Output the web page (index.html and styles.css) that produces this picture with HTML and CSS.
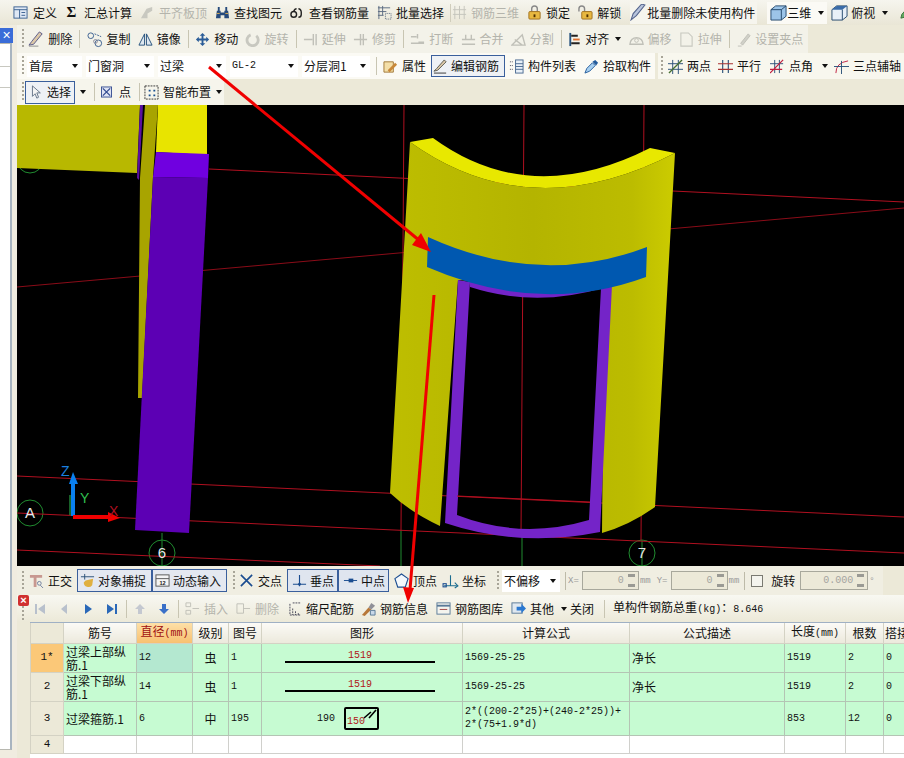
FILE: index.html
```html
<!DOCTYPE html>
<html lang="zh">
<head>
<meta charset="utf-8">
<title>钢筋编辑</title>
<link rel="stylesheet" href="styles.css">
</head>
<body>
<svg width="0" height="0" class="defs">
<defs>
<linearGradient id="wall" x1="0" x2="1" y1="0" y2="0">
<stop offset="0" stop-color="#bebe00"/><stop offset=".5" stop-color="#b4b400"/><stop offset=".85" stop-color="#bcbc00"/><stop offset="1" stop-color="#cccc00"/>
</linearGradient>
</defs>
</svg>

<div class="app">
  <header class="bar-top">
    <div class="it i5"><svg class="ic" viewBox="0 0 16 16"><rect x="1" y="2" width="14" height="12" fill="#dfe8f4" stroke="#3a6090"/><path d="M1 5h14M7 5v9M9 8h4M9 11h4" stroke="#3a6090"/></svg><span>定义</span></div>
    <div class="it i6"><b class="sigma">Σ</b><span>汇总计算</span></div>
    <div class="it off"><svg class="ic" viewBox="0 0 16 16"><path d="M1 14l6-10 6-2v4l-5 3v5z" fill="#c8c8c0"/></svg><span>平齐板顶</span></div>
    <div class="it"><svg class="ic" viewBox="0 0 16 16"><path d="M2 6h4v8H1zM10 6h4l1 8h-5zM6 8h4v3H6zM3 2h2v4H3zM11 2h2v4h-2z" fill="#264a7c"/><path d="M2 9h3M11 9h3" stroke="#e0b050"/></svg><span>查找图元</span></div>
    <div class="it"><svg class="ic" viewBox="0 0 16 16"><circle cx="4" cy="10" r="3" fill="none" stroke="#222" stroke-width="1.5"/><path d="M4 7q1-3 3-3M12 7q-1-3-3-3M12 7v3a3 3 0 0 1-3 3" fill="none" stroke="#222" stroke-width="1.5"/></svg><span>查看钢筋量</span></div>
    <div class="it"><svg class="ic" viewBox="0 0 16 16"><path d="M2 1v14M6 1v10M1 3h13M1 7h9M1 11h6" stroke="#5a6a80"/><rect x="9" y="9" width="6" height="6" fill="none" stroke="#5a6a80" stroke-dasharray="1 1"/></svg><span>批量选择</span></div>
    <i class="sep s-top"></i>
    <div class="it off"><svg class="ic" viewBox="0 0 16 16"><path d="M3 1v14M8 1v14M13 1v14M1 5h14M1 10h14" stroke="#c4c4bc"/></svg><span>钢筋三维</span></div>
    <div class="it"><svg class="ic" viewBox="0 0 16 16"><path d="M5 7V4a3 3 0 0 1 6 0v3" fill="none" stroke="#888" stroke-width="1.5"/><rect x="2" y="7" width="12" height="8" rx="1" fill="#e8b840" stroke="#a07020"/><rect x="7" y="10" width="2" height="3" fill="#503000"/></svg><span>锁定</span></div>
    <div class="it"><svg class="ic" viewBox="0 0 16 16"><path d="M1 7V4a3 3 0 0 1 6 0v3" fill="none" stroke="#888" stroke-width="1.5"/><rect x="4" y="7" width="11" height="8" rx="1" fill="#e8b840" stroke="#a07020"/><rect x="9" y="10" width="2" height="3" fill="#503000"/></svg><span>解锁</span></div>
    <div class="it wide"><svg class="ic" viewBox="0 0 16 16"><path d="M1 15l5-4 8-10-3-1-8 9z" fill="#b8c4dc" stroke="#54648c"/></svg><span>批量删除未使用构件</span></div>
    <div class="view">
      <div class="it"><svg class="ic lg" viewBox="0 0 18 18"><path d="M1 6l5-4h11v11l-5 4H1z" fill="#9cc4e8" stroke="#24486c"/><path d="M1 6h11v11M12 6l5-4" fill="none" stroke="#24486c"/></svg><span>三维</span></div><i class="arw"></i>
    </div>
    <div class="it"><svg class="ic lg" viewBox="0 0 18 18"><path d="M1 6l5-4h11v11l-5 4H1z" fill="#e8f0f8" stroke="#24486c"/><path d="M1 6l5-4h11l-5 4z" fill="#3a6ca8"/><path d="M12 6v11" stroke="#24486c"/></svg><span>俯视</span></div><i class="arw"></i>
    <svg class="ic end" viewBox="0 0 16 16"><path d="M2 14l4-1 8-10-3-2-8 9z" fill="#60a860" stroke="#387038"/></svg>
  </header>

  <div class="shell">
    <aside class="side">
      <div class="side-tab">×</div>
      <div class="side-list"><div class="side-a"></div><div class="side-b"></div></div>
    </aside>
    <main class="work">
      <div class="tb tb-edit">
        <i class="grip"></i>
        <div class="it n1"><svg class="ic lg" viewBox="0 0 18 18"><path d="M1 15l5-1 9-11-3-2-8 10z" fill="#dcc8a8" stroke="#5a5a88"/><path d="M1 16h10" stroke="#8a8a8a"/></svg><span>删除</span></div>
        <i class="sep"></i>
        <div class="it"><svg class="ic lg" viewBox="0 0 18 18"><circle cx="4" cy="5" r="3" fill="none" stroke="#3a6090"/><circle cx="12" cy="13" r="3.5" fill="none" stroke="#3a6090"/><circle cx="9" cy="11" r="2" fill="none" stroke="#889"/><path d="M8 3l7 3" stroke="#3a6090" stroke-dasharray="2 1"/></svg><span>复制</span></div>
        <div class="it"><svg class="ic" viewBox="0 0 16 16"><path d="M7 2L1 14h6zM9 2l6 12H9z" fill="#dfe8f0" stroke="#24507c"/></svg><span>镜像</span></div>
        <i class="sep"></i>
        <div class="it"><svg class="ic" viewBox="0 0 16 16"><path d="M8 1l3 3H9v3h3V5l3 3-3 3V9H9v3h2l-3 3-3-3h2V9H4v2L1 8l3-3v2h3V4H5z" fill="#2a5c98"/></svg><span>移动</span></div>
        <div class="it off"><svg class="ic" viewBox="0 0 16 16"><path d="M12 4a6 6 0 1 1-6-1" fill="none" stroke="#c8c8c0" stroke-width="3"/></svg><span>旋转</span></div>
        <i class="sep"></i>
        <div class="it off"><svg class="ic" viewBox="0 0 16 16"><path d="M1 8h9M11 2v12M14 2v12" stroke="#c0c0b8" stroke-width="1.5"/></svg><span>延伸</span></div>
        <div class="it off"><svg class="ic" viewBox="0 0 16 16"><path d="M1 8h14M8 2v12M11 2v12" stroke="#c0c0b8" stroke-width="1.5"/></svg><span>修剪</span></div>
        <i class="sep"></i>
        <div class="it off"><svg class="ic" viewBox="0 0 16 16"><path d="M1 5h6M9 11h6M1 12h14M8 2v5" stroke="#c0c0b8" stroke-width="1.5"/></svg><span>打断</span></div>
        <div class="it off"><svg class="ic" viewBox="0 0 16 16"><path d="M1 8h14M1 13h14M5 3v5M11 3v5" stroke="#c0c0b8" stroke-width="1.5"/></svg><span>合并</span></div>
        <div class="it off"><svg class="ic" viewBox="0 0 16 16"><path d="M1 14h14L12 3 1 14zM4 8l8 6" fill="none" stroke="#c0c0b8" stroke-width="1.5"/></svg><span>分割</span></div>
        <i class="sep"></i>
        <div class="it"><svg class="ic sm" viewBox="0 0 13 16"><path d="M2 1v14" stroke="#24507c" stroke-width="2"/><path d="M3 4h7M3 12h9" stroke="#222" stroke-width="2"/><path d="M5 8h7" stroke="#e07030" stroke-width="2"/></svg><span>对齐</span></div><i class="arw a-in"></i>
        <div class="it off"><svg class="ic" viewBox="0 0 16 16"><path d="M1 13a7 7 0 0 1 14 0z" fill="none" stroke="#c0c0b8" stroke-width="1.5"/><circle cx="8" cy="9" r="2" fill="none" stroke="#c0c0b8"/></svg><span>偏移</span></div>
        <div class="it off"><svg class="ic" viewBox="0 0 16 16"><path d="M2 1h8l4 4v10H2z" fill="none" stroke="#c8c8c0" stroke-width="1.2"/></svg><span>拉伸</span></div>
        <i class="sep"></i>
        <div class="it off"><svg class="ic" viewBox="0 0 16 16"><path d="M2 15h4M5 12l8-10 2 2-8 10z" fill="#d0d0c8" stroke="#c0c0b8"/></svg><span>设置夹点</span></div>
      </div>

      <div class="tb-split">
        <div class="tb tb-comp">
          <i class="grip"></i>
          <div class="combo c1"><span>首层</span><i class="arw"></i></div>
          <div class="combo"><span>门窗洞</span><i class="arw"></i></div>
          <div class="combo"><span>过梁</span><i class="arw"></i></div>
          <div class="combo"><span class="mono">GL-2</span><i class="arw"></i></div>
          <div class="combo"><span>分层洞1</span><i class="arw"></i></div>
          <i class="sep"></i>
          <div class="it"><svg class="ic" viewBox="0 0 16 16"><path d="M1 3h10v11H1z" fill="#f4dfa8" stroke="#a07838"/><path d="M5 12l8-8 2 2-8 8z" fill="#c88838"/></svg><span>属性</span></div>
          <div class="it btn b-edit"><svg class="ic" viewBox="0 0 16 16"><path d="M1 13l4-1 9-9-2-2-8 9z" fill="#dcc8a8" stroke="#5a5a50"/><path d="M1 15h13" stroke="#333"/></svg><span>编辑钢筋</span></div>
          <div class="it"><svg class="ic" viewBox="0 0 16 16"><path d="M1 3h3M1 7h3M1 11h3" stroke="#445" stroke-dasharray="1 1"/><rect x="7" y="1" width="8" height="14" fill="#e8f0f8" stroke="#4a6a90"/><path d="M7 5h8M7 8h8M7 11h8" stroke="#4a6a90"/></svg><span>构件列表</span></div>
          <div class="it pick"><svg class="ic" viewBox="0 0 16 16"><path d="M1 15l2-5 6-6 3 3-6 6z" fill="#a8d0f0" stroke="#245c9c"/><path d="M9 3l3-2 3 3-2 3z" fill="#245c9c"/></svg><span>拾取构件</span></div>
        </div>
        <div class="tb tb-axis">
          <i class="grip"></i>
          <div class="it"><svg class="ic" viewBox="0 0 16 16"><path d="M5 1v15M11 1v15M0 5h16M0 11h16" stroke="#2a5078"/><path d="M1 15L15 1" stroke="#487030" stroke-width="1.4"/></svg><span>两点</span></div>
          <div class="it"><svg class="ic" viewBox="0 0 16 16"><path d="M5 1v14M11 1v14" stroke="#2a5078" stroke-width="1.2"/><path d="M0 5h16M0 11h16" stroke="#a83030" stroke-width="1.2"/></svg><span>平行</span></div>
          <div class="it ang"><svg class="ic" viewBox="0 0 16 16"><path d="M5 1v14M10 1v14M0 5h14" stroke="#2a5078"/><path d="M0 15L14 1M0 11h13" stroke="#c02040" stroke-width="1.3"/></svg><span>点角</span></div><i class="arw a-in"></i>
          <div class="it"><svg class="ic" viewBox="0 0 16 16"><path d="M2 15q0-11 13-13" fill="none" stroke="#c02040"/><path d="M8 2v14M0 8h16" stroke="#2a5078"/></svg><span>三点辅轴</span></div>
        </div>
      </div>

      <div class="tb tb-sel">
        <i class="grip"></i>
        <div class="it btn b-sel"><svg class="ic xs" viewBox="0 0 11 16"><path d="M2 1v12l3-3 2 5 2-1-2-5h4z" fill="#f4f4f4" stroke="#5a6a80"/></svg><span>选择</span></div><i class="arw a-in"></i>
        <i class="sep"></i>
        <div class="it g7"><svg class="ic xs" viewBox="0 0 12 12"><rect x=".5" y=".5" width="11" height="11" fill="#dfe4f4" stroke="#344c90"/><path d="M2 2l8 8M10 2l-8 8" stroke="#344c90" stroke-width="1.4"/></svg><span>点</span></div>
        <i class="sep"></i>
        <div class="it"><svg class="ic" viewBox="0 0 16 16"><rect x="1" y="1" width="14" height="14" fill="none" stroke="#333" stroke-dasharray="2 1"/><path d="M5 5h2v2H5zM10 5h2v2h-2zM5 10h2v2H5zM10 10h2v2h-2z" fill="#1a5090"/></svg><span>智能布置</span></div><i class="arw a-in"></i>
      </div>

      <div class="scene">
        <svg class="scene-svg" viewBox="17 105 887 461" width="887" height="461">
          <rect x="17" y="105" width="887" height="461" fill="#000"/>
          <g class="grid-g">
            <path d="M162 533V566M401 530V566M522 535V566M642 540V566"/>
            <circle cx="30" cy="513" r="13"/><circle cx="162" cy="553" r="13"/><circle cx="642" cy="553" r="13"/><circle cx="30" cy="160" r="13"/>
          </g>
          <g class="grid-r">
            <path d="M209 169L904 202"/>
            <path class="dim-l" d="M17 287L904 208"/>
            <path d="M17 476L904 517"/>
            <path d="M17 513L904 553"/>
            <path d="M17 550L380 566"/>
            <path d="M404 105L401 530"/><path d="M524 105L521 535"/><path d="M644 105L641 540"/>
          </g>
          <text class="ax-a" x="30" y="518">A</text><text class="ax-a" x="162" y="558">6</text><text class="ax-a" x="642" y="558">7</text>
          <!-- left wall and column -->
          <polygon points="17,105 140,105 137,173 17,168" fill="#b8b800"/>
          <polygon points="158,105 207,105 207,155 156,152" fill="#e8e400"/>
          <polygon points="145,105 158,105 153,177 142,398 138,398 140,178" fill="#a8a400"/>
          <polygon points="140,105 143,105 139,180 137,178" fill="#5a10a0"/>
          <polygon points="153,177 208,178 189,533 135,530" fill="#5c00b4"/>
          <polygon points="156,152 209,154 208,178 153,177" fill="#7000e0"/>
          <!-- door wall -->
          <path d="M410 142Q530 228 675 153L655 507Q630 525 602 533L604 288 458 280 440 526Q410 512 390 493Z" fill="url(#wall)"/>
          <path d="M410 142L433 138Q530 209 650 148L675 153Q530 228 410 142Z" fill="#e8e800"/>
          <path d="M458 280L470 282 457 515Q522 540 589 520L601 288 612 285 600 532Q520 548 445 523Z" fill="#7424c8"/>
          <path d="M470 278L603 278 603 288Q535 308 470 287Z" fill="#7424c8"/>
          <path d="M457 496L590 502" class="in-r"/>
          <path d="M428 237Q540 288 647 247L646 277Q540 316 427 267Z" fill="#0058b0"/>
          <!-- axes -->
          <path d="M70 495V515" stroke="#30c050"/>
          <rect x="71" y="480" width="4" height="36" fill="#0a80f0"/>
          <polygon points="73,472 78,484 69,484" fill="#0a80f0"/>
          <rect x="73" y="515" width="36" height="4" fill="#f00000"/>
          <polygon points="120,518 108,512 108,522" fill="#f00000"/>
          <text class="ax z" x="61" y="476">Z</text><text class="ax y" x="80" y="503">Y</text><text class="ax x" x="109" y="516">X</text>
        </svg>
      </div>

      <div class="tb tb-snap">
        <i class="grip"></i>
        <div class="it"><svg class="ic" viewBox="0 0 16 16"><path d="M1 2h13v3H8v10H5V5H1z" fill="#c89890"/><circle cx="11" cy="11" r="2" fill="none" stroke="#7080a0"/><path d="M12 13l3 3" stroke="#7080a0"/></svg><span>正交</span></div>
        <div class="snap-g">
          <div class="it btn b75"><svg class="ic" viewBox="0 0 16 16"><path d="M1 4h14M5 1v6" stroke="#2a5078"/><path d="M4 10a5 5 0 0 0 9 3l1-7-8 2z" fill="#e0b040"/></svg><span>对象捕捉</span></div>
          <div class="it btn b75"><svg class="ic" viewBox="0 0 16 16"><rect x="1" y="2" width="14" height="12" fill="#f4f4f4" stroke="#555"/><path d="M1 6h14" stroke="#555"/><text class="ic-t" x="8" y="13">12</text></svg><span>动态输入</span></div>
        </div>
        <i class="grip g-m"></i>
        <div class="it"><svg class="ic" viewBox="0 0 16 16"><path d="M2 2l12 12M14 2L2 14" stroke="#1a4c90" stroke-width="1.7"/></svg><span>交点</span></div>
        <div class="snap-g">
          <div class="it btn b51"><svg class="ic" viewBox="0 0 16 16"><path d="M8 2v12M1 12h14" stroke="#1a4c90" stroke-width="1.2"/><circle cx="8" cy="12" r="1.5" fill="#1a4c90"/></svg><span>垂点</span></div>
          <div class="it btn b51"><svg class="ic" viewBox="0 0 16 16"><path d="M1 8h14" stroke="#1a4c90"/><rect x="6" y="6" width="5" height="4" fill="#1a4c90"/></svg><span>中点</span></div>
        </div>
        <div class="it"><svg class="ic" viewBox="0 0 16 16"><path d="M8 1l7 5-3 9H4L1 6z" fill="#f4f8fc" stroke="#1a4c90" stroke-width="1.2"/></svg><span>顶点</span></div>
        <div class="it"><svg class="ic lg" viewBox="0 0 16 16"><path d="M8 3v10M2 13h12" stroke="#1a6c90"/><rect x="1" y="11" width="3" height="3" fill="none" stroke="#1a4c90"/><path d="M12 10l3 3-3 2" fill="none" stroke="#1a6c90"/></svg><span>坐标</span></div>
        <i class="grip g-n"></i>
        <div class="combo c-off"><span>不偏移</span><i class="arw"></i></div>
        <i class="sep s-n"></i>
        <span class="lab mono">X=</span><div class="spin s57"><span class="mono">0</span><i class="spn"></i></div><span class="lab mono mm">mm</span>
        <span class="lab mono ly">Y=</span><div class="spin s57"><span class="mono">0</span><i class="spn"></i></div><span class="lab mono mm">mm</span>
        <i class="sep s-n"></i>
        <i class="check"></i><span class="rot">旋转</span>
        <div class="spin s68"><span class="mono">0.000</span><i class="spn"></i></div><span class="lab mono mm">°</span>
      </div>

      <div class="tb tb-rebar">
        <div class="dock"><i class="close">×</i><i class="grip"></i></div>
        <svg class="nv n0" viewBox="0 0 12 12"><path d="M1 1h2v10H1zM11 1v10L4 6z" fill="#b8c0cc"/></svg>
        <svg class="nv" viewBox="0 0 12 12"><path d="M9 1v10L3 6z" fill="#b8c0cc"/></svg>
        <svg class="nv" viewBox="0 0 12 12"><path d="M3 1v10l7-5z" fill="#2a68b8"/></svg>
        <svg class="nv" viewBox="0 0 12 12"><path d="M1 1v10l7-5zM9 1h2v10H9z" fill="#2a68b8"/></svg>
        <i class="sep"></i>
        <svg class="nv" viewBox="0 0 12 12"><path d="M6 1l5 5H8v5H4V6H1z" fill="#c4c8d0"/></svg>
        <svg class="nv" viewBox="0 0 12 12"><path d="M4 1h4v5h3l-5 5-5-5h3z" fill="#3a70c8"/></svg>
        <i class="sep"></i>
        <div class="it off ins"><svg class="ic" viewBox="0 0 16 16"><path d="M1 2h5v4H1zM1 10h5v4H1zM8 8h7" fill="none" stroke="#c0c0b8"/></svg><span>插入</span></div>
        <div class="it off"><svg class="ic" viewBox="0 0 16 16"><path d="M1 3h7v10H1zM8 8h7" fill="none" stroke="#c0c0b8"/></svg><span>删除</span></div>
        <div class="it scale"><svg class="ic sm" viewBox="0 0 14 16"><path d="M1 3v12M4 8v7M7 11v4M10 13v2M1 15h12M4 2h9" stroke="#445" stroke-dasharray="2 1"/></svg><span>缩尺配筋</span></div>
        <div class="it"><svg class="ic" viewBox="0 0 16 16"><path d="M1 15l7-8 3 2-7 7z" fill="#b87838"/><path d="M8 7l3-5 4 3-4 4z" fill="#909098"/><path d="M10 10h5v5h-5z" fill="#c8d8e8" stroke="#5a7a98"/></svg><span>钢筋信息</span></div>
        <div class="it"><svg class="ic" viewBox="0 0 16 16"><rect x="1" y="2" width="14" height="12" fill="#f4f4ee" stroke="#5a7a98"/><path d="M1 5h14" stroke="#5a7a98" stroke-width="2"/><path d="M4 9h8" stroke="#a04040"/></svg><span>钢筋图库</span></div>
        <div class="it"><svg class="ic" viewBox="0 0 16 16"><rect x="1" y="2" width="11" height="11" fill="#dfe8f0" stroke="#5a7a98"/><path d="M6 6h5V3l5 5-5 5v-3H6z" fill="#2a78d0"/></svg><span>其他</span></div><i class="arw a-in"></i>
        <div class="it shut"><span>关闭</span></div>
        <i class="sep s-close"></i>
        <div class="it"><span>单构件钢筋总重<small class="mono">(kg)</small>：<span class="mono">8.646</span></span></div>
      </div>

      <div class="tbl-wrap">
        <table class="tbl">
          <colgroup><col class="w33"><col class="w73"><col class="w56"><col class="w36"><col class="w33"><col class="w201"><col class="w167"><col class="w155"><col class="w61"><col class="w38"><col class="w30"></colgroup>
          <thead>
            <tr><th></th><th>筋号</th><th class="cur">直径<small class="mono">(mm)</small></th><th>级别</th><th>图号</th><th>图形</th><th>计算公式</th><th>公式描述</th><th>长度<small class="mono">(mm)</small></th><th>根数</th><th class="clip">搭接</th></tr>
          </thead>
          <tbody>
            <tr class="r1 g">
              <td class="rh rh-on mono">1*</td><td class="name">过梁上部纵筋.1</td><td class="mono sel">12</td><td class="ctr">虫</td><td class="mono">1</td>
              <td><div class="fig"><span class="dim mono">1519</span><i class="rebar"></i></div></td>
              <td class="mono">1569-25-25</td><td>净长</td><td class="mono">1519</td><td class="mono">2</td><td class="mono">0</td>
            </tr>
            <tr class="r1 g">
              <td class="rh mono">2</td><td class="name">过梁下部纵筋.1</td><td class="mono dia">14</td><td class="ctr">虫</td><td class="mono">1</td>
              <td><div class="fig"><span class="dim mono">1519</span><i class="rebar"></i></div></td>
              <td class="mono">1569-25-25</td><td>净长</td><td class="mono">1519</td><td class="mono">2</td><td class="mono">0</td>
            </tr>
            <tr class="r3 g">
              <td class="rh mono">3</td><td class="name">过梁箍筋.1</td><td class="mono dia">6</td><td class="ctr">中</td><td class="mono">195</td>
              <td><div class="stir"><span class="mono blk">190</span><div class="hoop"><span class="mono">150</span><svg class="hook" viewBox="0 0 14 10"><path d="M1 9L8 3M6 9L13 1" stroke="#000" stroke-width="1.6"/></svg></div></div></td>
              <td class="mono f2">2*((200-2*25)+(240-2*25))+<br>2*(75+1.9*d)</td><td></td><td class="mono">853</td><td class="mono">12</td><td class="mono">0</td>
            </tr>
            <tr class="r4">
              <td class="rh mono">4</td><td></td><td class="dia"></td><td></td><td></td><td></td><td></td><td></td><td></td><td></td><td></td>
            </tr>
          </tbody>
        </table>
      </div>
    </main>
  </div>

  <svg class="overlay" viewBox="0 0 904 758" width="904" height="758">
    <path d="M209 67L420 241" class="ar"/>
    <polygon points="431,252 412,245 421,233" fill="#f00000"/>
    <path d="M434 295L410 590" class="ar"/>
    <polygon points="408,603 403,587 414,588" fill="#f00000"/>
  </svg>
</div>
</body>
</html>
```
FILE: styles.css
```css
*{box-sizing:border-box}
html,body{margin:0;padding:0}
body{width:904px;height:758px;overflow:hidden;background:#ece9d8;font:12px/16px "Noto Sans CJK SC","Liberation Sans",sans-serif;color:#111}
i{font-style:normal;display:block}
.defs{position:absolute}
.app{position:relative;width:904px;height:758px;overflow:hidden}
.mono{font-family:"Liberation Mono","Noto Sans CJK SC",monospace;font-size:10px}
.it{display:flex;align-items:center;gap:4px;flex:none;white-space:nowrap}
.off{color:#b4b4ac}
.ic{width:15px;height:15px;flex:none;display:block}
.ic.lg{width:17px;height:17px;margin-right:-1px}
.ic.sm{width:13px;height:15px}
.ic.xs{width:11px;height:14px}
.ic-t{font:700 6px "Liberation Sans",sans-serif;text-anchor:middle;fill:#222}
.sep{width:1px;height:18px;background:#c8c5b2;flex:none}
.arw{width:0;height:0;border:3px solid transparent;border-top:4px solid #111;border-bottom:0;flex:none}
.grip{width:2px;height:20px;flex:none;background:repeating-linear-gradient(#a8a598 0 2px,transparent 2px 4px)}

.bar-top{height:25px;display:flex;align-items:center;gap:8px;padding-left:13px;background:linear-gradient(#f6f5ee,#e9e6d6)}
.i5{gap:5px}
.i6{gap:6px}
.sigma{width:13px;font:700 15px "Liberation Serif",serif;text-align:center}
.s-top{margin:0 -7px 0 -2px;background:#d0cdbc}
.wide{background:#f6f5ee;height:22px;margin-left:1px;gap:0;padding:0 2px 0 0}
.wide .ic{width:17px;height:17px}
.view{display:flex;align-items:center;gap:7px;background:#fbfaf5;height:22px;padding:0 3px;margin-left:2px;margin-right:-4px}
.view .it{gap:1px}
.bar-top>.arw{margin-left:-1px}
.end{margin-left:3px}

.shell{display:flex;height:733px}
.side{width:17px;flex:none;display:flex;flex-direction:column;background:#f0ece0;position:relative}
.side-tab{width:13px;height:15px;margin-top:3px;background:#3a6cd8;color:#fff;font:14px/15px "Liberation Sans",sans-serif;text-align:center}
.side-list{width:12px;height:707px;background:#fff;border-right:2px solid #a8b4c0;border-top:1px solid #b8b8b0;border-bottom:1px solid #b8b8b0}
.side-a{height:23px;border-bottom:1px solid #c8c8c0}
.side-b{height:21px;border-bottom:1px solid #c8c8c0}
.work{width:887px;flex:none;display:flex;flex-direction:column}

.tb{display:flex;align-items:center;flex:none;white-space:nowrap}
.tb>.grip{margin-left:5px}
.tb-edit{height:28px;width:791px;gap:7.2px;background:#f3f2e9}
.tb-edit .sep{margin-right:-1px}
.n1{margin-left:-3px}
.tb-split{display:flex;height:26px;gap:3px}
.tb-comp{width:638px;gap:4px;background:#fbfaf4}
.combo{width:68px;height:21px;display:flex;align-items:center;justify-content:space-between;background:#fff;padding:0 4px 0 2px;flex:none}
.c1{width:55px;margin-left:-1px}
.tb-comp>.sep{margin:0 2px 0 2px}
.pick{margin-left:4px}
.tb-axis{width:246px;gap:7px;background:#f8f7ee}
.tb-axis>.grip{margin-left:3px;margin-right:-2px}
.ang{margin-left:2px}
.tb-axis .a-in{margin:0 -1px 0 2px}
.btn{border:1px solid #3a5f9c;background:#eef1f5;height:22px}
.b-edit{width:74px;padding-left:1px;gap:3px;margin-left:1px}
.tb-sel{height:26px;gap:6px;width:207px;background:#f6f5ec}
.b-sel{width:50px;gap:6px;padding-left:4px;margin-left:-5px;height:23px}
.g7{gap:7px;margin-left:2px}
.a-in{margin-left:-1px}
.tb-sel .sep{margin:0 -2px 0 2px}

.scene{height:461px;flex:none;overflow:hidden}
.scene-svg{display:block}
.grid-g path,.grid-g circle{stroke:#208c30;fill:none;stroke-width:1}
.grid-r path{stroke:#b01020;fill:none;stroke-width:1}
.grid-r .dim-l{stroke:#8a0c18}
.in-r{stroke:#b01020;fill:none}
.ax-a{font:15px "Liberation Sans",sans-serif;fill:#e8e8e8;text-anchor:middle}
.ax{font:14px "Liberation Sans",sans-serif}
.z{fill:#1a80e0}.y{fill:#30c050}.x{fill:#b01020}

.tb-snap{height:29px;gap:5px;width:866px;background:#f0eee2}
.snap-g{display:flex}
.tb>.g-m{margin:0 -1px 0 1px}
.b75{width:75px;padding-left:2px;gap:3px;background:#e4e8f0;height:23px}
.b51{width:51px;padding-left:4px;gap:3px;background:#dfe5ef;height:23px}
.tb>.g-n{margin:0 -2px 0 6px}
.c-off{width:58px;height:22px}
.s-n{margin:0 -3px 0 0;background:#bdbaa8}
.lab{color:#999;font-size:9px}
.mm{margin-left:-4px}
.ly{margin-left:1px}
.spin{height:19px;background:#ece9d8;border:1px solid #a8a89c;display:flex;align-items:center;justify-content:flex-end;gap:4px;padding-right:3px;color:#a4a4a0;margin-left:-2px}
.s57{width:57px}
.s68{width:68px;margin-left:0}
.spn{width:7px;height:13px;background:linear-gradient(#9a9a94 0 3px,transparent 3px 10px,#9a9a94 10px)}
.check{width:12px;height:12px;border:1px solid #7a7a72;background:#f4f4ee;margin-left:4px}
.rot{margin-left:3px}

.tb-rebar{height:27px;width:887px;gap:8px;background:linear-gradient(#f8f8f2,#ece9d8)}
.dock{width:12px;display:flex;flex-direction:column;align-items:flex-start;height:27px;margin-left:1px;flex:none}
.tb-rebar .dock .grip{height:15px;margin-left:4px}
.close{width:11px;height:11px;background:#d03030;color:#fff;font:700 11px/10px "Liberation Sans",sans-serif;text-align:center;border-radius:2px}
.nv{width:12px;height:12px;flex:none;margin:0 2px}
.tb-rebar .n0{margin-left:-4px}
.tb-rebar .sep{margin:0 -3px 0 -2px}
.ins{margin-left:1px}
.scale{margin:0 -1px 0 2px}
.shut{margin-left:-5px}
.tb-rebar .s-close{margin:0 0 0 2px}
small{font-size:10px}

.tbl-wrap{height:136px;margin-left:13px;overflow:hidden;background:#fff;border-top:1px solid #9fb0c4}
.tbl{border-collapse:collapse;table-layout:fixed;width:874px}
.w33{width:33px}.w73{width:73px}.w56{width:56px}.w36{width:36px}.w201{width:201px}.w167{width:167px}.w155{width:155px}.w61{width:61px}.w38{width:38px}.w30{width:30px}
.tbl th{height:20px;padding:0;font-weight:400;text-align:center;background:linear-gradient(#fbfaf6,#ece9dc);border:1px solid #d4d2c4;border-top:0;white-space:nowrap;overflow:hidden}
.tbl th:first-child{background:#ece9d8}
.tbl th.cur{background:linear-gradient(#fde0a8,#f8c070);color:#a01010}
.tbl th.clip{text-align:left;padding-left:1px}
.tbl td{padding:0 0 0 2px;border:1px solid #b4c4b4;overflow:hidden;line-height:13px}
.tbl tr.g td{background:#c6fbd2}
.r1 td{height:29px}
.r3 td{height:34px}
.tbl .r4 td{height:18px;border-color:#d0d0cc}
.tbl tr .rh{background:#ece9d8;text-align:center;padding:0;font-size:11px;border-color:#d4d2c4}
.tbl tr.g .rh{background:#ece9d8}
.tbl tr.g .rh-on{background:#fbc878}
.name{word-break:break-all}
.tbl tr.g td.sel{background:#b4e8d0;border-left:1px solid #000}
.tbl td.dia{border-left:1px solid #000}
.tbl td.ctr{text-align:center;padding:0}
.fig{position:relative;height:28px;width:150px;margin-left:21px}
.dim{position:absolute;left:0;right:0;top:5px;text-align:center;color:#b01818}
.rebar{position:absolute;left:0;right:0;top:17px;height:2px;background:#000}
.stir{display:flex;align-items:center;height:30px;padding-left:53px;gap:9px}
.blk{color:#111}
.hoop{width:35px;height:23px;border:2px solid #000;border-radius:2px;position:relative;display:flex;align-items:flex-end;color:#b01818;padding-left:1px;line-height:12px}
.hook{position:absolute;right:0;top:0;width:14px;height:10px}
.f2{line-height:12px}

.overlay{position:absolute;left:0;top:0;pointer-events:none}
.ar{stroke:#f00000;stroke-width:3;fill:none}
```
